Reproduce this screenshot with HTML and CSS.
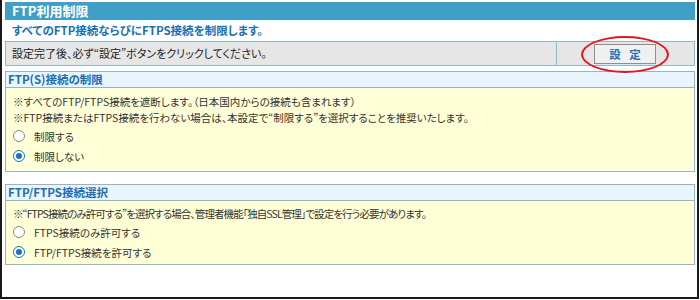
FILE: index.html
```html
<!DOCTYPE html>
<html lang="ja">
<head>
<meta charset="utf-8">
<link rel="stylesheet" href="styles.css">
</head>
<body>
<div class="frame">
  <div class="page-title">FTP利用制限</div>
  <div class="lead">すべてのFTP接続ならびにFTPS接続を制限します。</div>
  <div class="action-bar">
    <div class="action-text">設定完了後、必ず“設定”ボタンをクリックしてください。</div>
    <div class="action-btn-cell">
      <button class="btn-set">設 定</button>
      <span class="ring"></span>
    </div>
  </div>

  <div class="section first">
    <div class="section-head">FTP(S)接続の制限</div>
    <div class="section-body">
      <p class="note">※すべてのFTP/FTPS接続を遮断します。（日本国内からの接続も含まれます）</p>
      <p class="note">※FTP接続またはFTPS接続を行わない場合は、本設定で“制限する”を選択することを推奨いたします。</p>
      <label class="opt"><span class="radio"></span>制限する</label>
      <label class="opt"><span class="radio on"></span>制限しない</label>
    </div>
  </div>

  <div class="section second">
    <div class="section-head">FTP/FTPS接続選択</div>
    <div class="section-body">
      <p class="note tight">※“FTPS接続のみ許可する”を選択する場合、管理者機能「独自SSL管理」で設定を行う必要があります。</p>
      <label class="opt"><span class="radio"></span>FTPS接続のみ許可する</label>
      <label class="opt"><span class="radio on"></span>FTP/FTPS接続を許可する</label>
    </div>
  </div>
</div>
</body>
</html>
```

FILE: styles.css
```css
* { box-sizing: border-box; }
html, body { margin: 0; padding: 0; background: #fff; }
body {
  font-family: "Noto Sans CJK JP", "Noto Sans", sans-serif;
  font-size: 11px;
  color: #333;
  font-feature-settings: "palt";
}
.frame {
  width: 699px;
  height: 299px;
  border-left: 2px solid #1a1a1a;
  border-right: 2px solid #1a1a1a;
  border-bottom: 2px solid #1a1a1a;
  padding: 2px 2px 0 3px;
}
.page-title {
  height: 18px;
  background: #3f9fc7;
  color: #fff;
  font-weight: bold;
  font-size: 13px;
  line-height: 18px;
  padding-left: 7px;
}
.lead {
  height: 21px;
  line-height: 20px;
  color: #1a6fb5;
  font-weight: bold;
  font-size: 11.5px;
  padding-left: 7px;
}
.action-bar {
  display: flex;
  height: 25px;
  border: 1px solid #93b5c9;
  background: #e6e6e6;
}
.action-text {
  flex: 1;
  line-height: 23px;
  padding-left: 6px;
  font-size: 11px;
  color: #222;
  border-right: 1px solid #93b5c9;
}
.action-btn-cell {
  position: relative;
  width: 137px;
  display: flex;
  align-items: center;
  padding-left: 37px;
}
.btn-set {
  width: 62px;
  height: 20px;
  border: 1px solid #8f8f8f;
  background: #f0f0f0;
  color: #1a6fb5;
  font-family: inherit;
  font-weight: bold;
  font-size: 11.5px;
  letter-spacing: 3px;
  padding: 0 0 0 3px;
  line-height: 18px;
}
.ring {
  position: absolute;
  left: 24px;
  top: -6px;
  width: 88px;
  height: 37px;
  border: 2px solid #e8141b;
  border-radius: 50%;
}
.section {
  margin-top: 5px;
  border: 1px solid #93b5c9;
}
.section.second { margin-top: 12px; }
.section-head {
  height: 16px;
  line-height: 15px;
  background: #eaf4fd;
  border-bottom: 1px solid #93b5c9;
  color: #1a6fb5;
  font-weight: bold;
  font-size: 11.5px;
  padding-left: 2px;
}
.section-body {
  background: #ffffd7;
  padding: 6px 0 5px 7px;
}
.section.second .section-body {
  padding: 5px 0 2px 7px;
}
.note {
  margin: 0;
  height: 16px;
  line-height: 16px;
  font-size: 10.5px;
  color: #333;
}
.note.tight { letter-spacing: -0.9px; }
.opt {
  display: flex;
  align-items: center;
  height: 20px;
  font-size: 10.5px;
  color: #333;
}
.radio {
  width: 12px;
  height: 12px;
  border-radius: 50%;
  border: 1px solid #8a8a8a;
  background: #fff;
  margin-right: 9px;
  position: relative;
}
.radio.on {
  border-color: #1a6fd0;
}
.radio.on::after {
  content: "";
  position: absolute;
  left: 2px;
  top: 2px;
  width: 6px;
  height: 6px;
  border-radius: 50%;
  background: #1a6fd0;
}
```
